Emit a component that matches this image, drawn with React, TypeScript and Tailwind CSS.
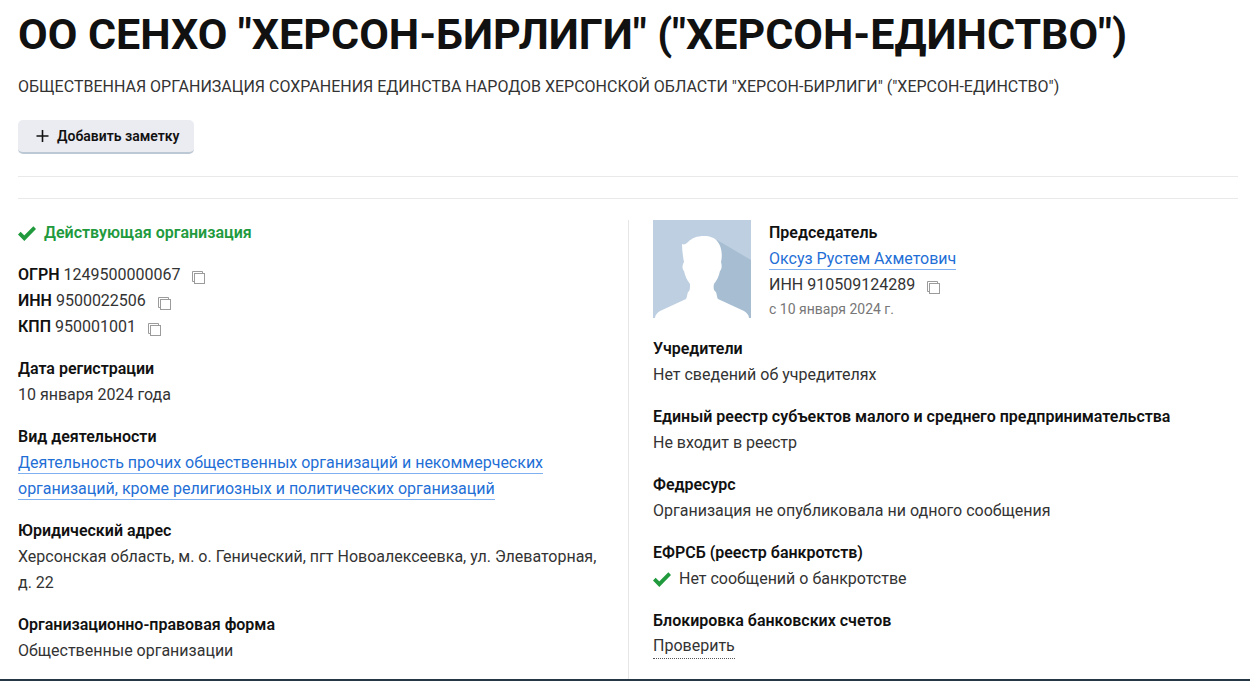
import React from 'react';

interface FieldProps {
    title: string;
    children: React.ReactNode;
}

interface CodeRowProps {
    label: string;
    value: string;
    strong?: boolean;
}

const CopyIcon = () => (
    <svg width="13" height="13" viewBox="0 0 13 13" fill="none" stroke="#9b9b9b" aria-hidden="true">
        <path d="M2.5 10.5H0.5V0.5H10.5V2.5" />
        <rect x="2.5" y="2.5" width="10" height="10" />
    </svg>
);

const CheckIcon = () => (
    <svg width="18" height="15" viewBox="0 0 18 15" fill="none" stroke="#219a3d" strokeWidth="3.8" className="shrink-0" aria-hidden="true">
        <path d="M1.3 7.2L6.3 12.2L16.7 1.6" />
    </svg>
);

const Avatar = () => (
    <svg width="98" height="98" viewBox="0 0 98 98" className="shrink-0" role="img" aria-label="Председатель">
        <rect width="98" height="98" fill="#bdcfe0" />
        <path d="M64 20L98 40V98H55V50Z" fill="#a7bed2" />
        <path
            d="M2 98C2 95 4 93 7 91L33 79C34 77 34 75 35 72C37 71 37 68 37 64C34 60 32 56 31 51C29 49 29 45 31 42C30 37 29 30 29 24C31 25 33 24 35 22C39 18 44 16 51 16C57 16 62 18 64 21C68 25 70 34 68 42C69 45 69 49 67 51C66 56 64 60 61 64C60 68 61 71 63 72C64 75 64 78 65 79L91 91C94 93 96 95 96 98Z"
            fill="#fff"
        />
    </svg>
);

const Field: React.FC<FieldProps> = ({ title, children }) => (
    <section>
        <h2 className="font-semibold text-[#111]">{title}</h2>
        {children}
    </section>
);

const CodeRow: React.FC<CodeRowProps> = ({ label, value, strong = true }) => (
    <div className="flex items-center gap-1">
        <span className={strong ? 'font-semibold text-[#111]' : ''}>{label}</span>
        <span>{value}</span>
        <button type="button" aria-label={`Скопировать ${label}`} className="ml-2 mt-1">
            <CopyIcon />
        </button>
    </div>
);

const linkClass = 'border-b border-[#7fb0f0] pb-px text-[#1f6fd6]';

export default function App() {
    return (
        <div className="h-screen overflow-hidden bg-white border-b-2 border-[#253746] pl-[18px] pr-3 font-['Roboto',sans-serif] text-base leading-[26px] text-[#333]">
            {/* Header */}
            <header>
                <h1 className="pt-2 text-[43px] leading-[52px] font-bold text-[#111]">
                    ОО СЕНХО "ХЕРСОН-БИРЛИГИ" ("ХЕРСОН-ЕДИНСТВО")
                </h1>
                <p className="mt-3.5">
                    ОБЩЕСТВЕННАЯ ОРГАНИЗАЦИЯ СОХРАНЕНИЯ ЕДИНСТВА НАРОДОВ ХЕРСОНСКОЙ ОБЛАСТИ "ХЕРСОН-БИРЛИГИ" ("ХЕРСОН-ЕДИНСТВО")
                </p>
                <button
                    type="button"
                    className="mt-5 flex h-[34px] items-center gap-2 rounded-[5px] border-b-2 border-[#bcc8d4] bg-[#ebecf1] pr-3.5 pl-[18px] text-sm font-semibold text-[#111]"
                >
                    <svg width="13" height="12" viewBox="0 0 13 12" stroke="#111" strokeWidth="1.6" aria-hidden="true">
                        <path d="M6.5 0V12M0.5 6H12.5" />
                    </svg>
                    Добавить заметку
                </button>
            </header>

            <div className="mt-[22px] h-[23px] border-y border-[#e9e9e9]" />

            {/* Details */}
            <main className="mt-[21px] grid min-h-[470px] grid-cols-2">
                <div className="flex flex-col gap-4 pr-4">
                    <div className="flex items-center gap-2 font-semibold text-[#219a3d]">
                        <CheckIcon />
                        Действующая организация
                    </div>
                    <div>
                        <CodeRow label="ОГРН" value="1249500000067" />
                        <CodeRow label="ИНН" value="9500022506" />
                        <CodeRow label="КПП" value="950001001" />
                    </div>
                    <Field title="Дата регистрации">
                        <p>10 января 2024 года</p>
                    </Field>
                    <Field title="Вид деятельности">
                        <a href="#activity" className={linkClass}>
                            Деятельность прочих общественных организаций и некоммерческих<br />
                            организаций, кроме религиозных и политических организаций
                        </a>
                    </Field>
                    <Field title="Юридический адрес">
                        <p>
                            Херсонская область, м. о. Генический, пгт Новоалексеевка, ул. Элеваторная,<br />
                            д. 22
                        </p>
                    </Field>
                    <Field title="Организационно-правовая форма">
                        <p>Общественные организации</p>
                    </Field>
                </div>

                <div className="flex flex-col gap-4 border-l border-[#e6e6e6] pl-6">
                    <div className="flex gap-[18px]">
                        <Avatar />
                        <div>
                            <h2 className="font-semibold text-[#111]">Председатель</h2>
                            <a href="#chairman" className={linkClass}>Оксуз Рустем Ахметович</a>
                            <CodeRow label="ИНН" value="910509124289" strong={false} />
                            <p className="text-sm leading-[22px] text-[#777]">с 10 января 2024 г.</p>
                        </div>
                    </div>
                    <Field title="Учредители">
                        <p>Нет сведений об учредителях</p>
                    </Field>
                    <Field title="Единый реестр субъектов малого и среднего предпринимательства">
                        <p>Не входит в реестр</p>
                    </Field>
                    <Field title="Федресурс">
                        <p>Организация не опубликовала ни одного сообщения</p>
                    </Field>
                    <Field title="ЕФРСБ (реестр банкротств)">
                        <p className="flex items-center gap-2">
                            <CheckIcon />
                            Нет сообщений о банкротстве
                        </p>
                    </Field>
                    <Field title="Блокировка банковских счетов">
                        <button type="button" className="block border-b border-dotted border-[#555] leading-6">
                            Проверить
                        </button>
                    </Field>
                </div>
            </main>
        </div>
    );
}
